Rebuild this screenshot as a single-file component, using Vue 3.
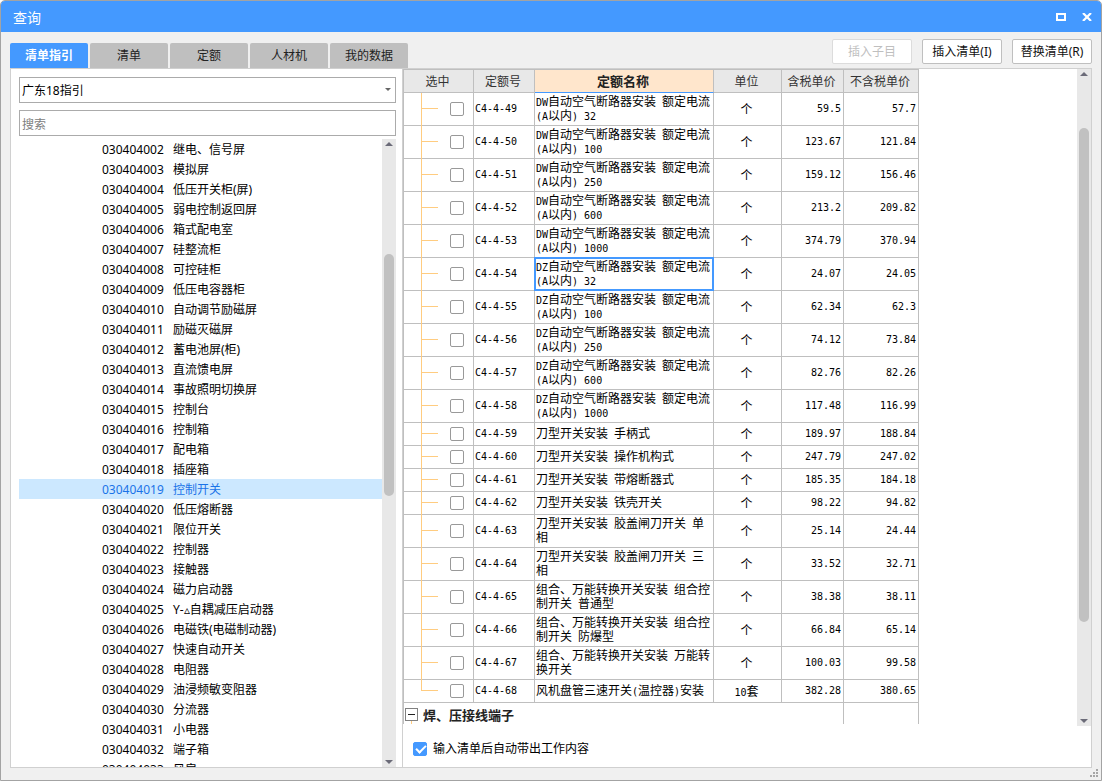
<script setup>
import { ref } from 'vue'

const tabs = ['清单指引', '清单', '定额', '人材机', '我的数据']
const activeTab = ref('清单指引')
const keyword = ref('')
const guide = ref('gd18')
const autoFill = ref(true)
const selectedItem = ref('030404019')
const selectedQuota = ref('C4-4-54')

const items = [
  '继电、信号屏', '模拟屏', '低压开关柜(屏)', '弱电控制返回屏', '箱式配电室', '硅整流柜',
  '可控硅柜', '低压电容器柜', '自动调节励磁屏', '励磁灭磁屏', '蓄电池屏(柜)', '直流馈电屏',
  '事故照明切换屏', '控制台', '控制箱', '配电箱', '插座箱', '控制开关', '低压熔断器', '限位开关',
  '控制器', '接触器', '磁力启动器', 'Y-▵自耦减压启动器', '电磁铁(电磁制动器)', '快速自动开关',
  '电阻器', '油浸频敏变阻器', '分流器', '小电器', '端子箱', '风扇'
].map((name, i) => ({ code: '0304040' + String(i + 2).padStart(2, '0'), name }))

const quotas = [
  ['DW自动空气断路器安装 额定电流(A以内) 32', '个', '59.5', '57.7'],
  ['DW自动空气断路器安装 额定电流(A以内) 100', '个', '123.67', '121.84'],
  ['DW自动空气断路器安装 额定电流(A以内) 250', '个', '159.12', '156.46'],
  ['DW自动空气断路器安装 额定电流(A以内) 600', '个', '213.2', '209.82'],
  ['DW自动空气断路器安装 额定电流(A以内) 1000', '个', '374.79', '370.94'],
  ['DZ自动空气断路器安装 额定电流(A以内) 32', '个', '24.07', '24.05'],
  ['DZ自动空气断路器安装 额定电流(A以内) 100', '个', '62.34', '62.3'],
  ['DZ自动空气断路器安装 额定电流(A以内) 250', '个', '74.12', '73.84'],
  ['DZ自动空气断路器安装 额定电流(A以内) 600', '个', '82.76', '82.26'],
  ['DZ自动空气断路器安装 额定电流(A以内) 1000', '个', '117.48', '116.99'],
  ['刀型开关安装 手柄式', '个', '189.97', '188.84'],
  ['刀型开关安装 操作机构式', '个', '247.79', '247.02'],
  ['刀型开关安装 带熔断器式', '个', '185.35', '184.18'],
  ['刀型开关安装 铁壳开关', '个', '98.22', '94.82'],
  ['刀型开关安装 胶盖闸刀开关 单相', '个', '25.14', '24.44'],
  ['刀型开关安装 胶盖闸刀开关 三相', '个', '33.52', '32.71'],
  ['组合、万能转换开关安装 组合控制开关 普通型', '个', '38.38', '38.11'],
  ['组合、万能转换开关安装 组合控制开关 防爆型', '个', '66.84', '65.14'],
  ['组合、万能转换开关安装 万能转换开关', '个', '100.03', '99.58'],
  ['风机盘管三速开关(温控器)安装', '10套', '382.28', '380.65']
].map(([name, unit, taxed, untaxed], i) => ({
  code: 'C4-4-' + (49 + i), name, unit, taxed, untaxed, checked: false
}))
const rows = ref(quotas)

// Splits a text into half-width and full-width runs, so that each gets its own face.
const runs = (text) =>
  text.match(/[\x20-\x7e]+|[^\x20-\x7e]+/g).map((t) => ({ t, half: /^[\x20-\x7e]/.test(t) }))
</script>

<template>
  <div class="window">
    <header class="titlebar">
      <h1>查询</h1>
      <div class="window-buttons">
        <button type="button" aria-label="最大化">
          <svg width="10" height="8" viewBox="0 0 10 8"><path d="M0 0H10V8H0ZM2 2V6H8V2Z" fill="#fff" fill-rule="evenodd" /></svg>
        </button>
        <button type="button" aria-label="关闭">
          <svg width="10" height="8" viewBox="0 0 10 8"><path d="M1 0L9 8M9 0L1 8" stroke="#fff" stroke-width="2.2" /></svg>
        </button>
      </div>
    </header>

    <div class="toolbar">
      <nav class="tabs">
        <button
          v-for="tab in tabs" :key="tab" type="button" class="tab"
          :class="{ active: tab === activeTab }" @click="activeTab = tab"
        >{{ tab }}</button>
      </nav>
      <div class="actions">
        <button type="button" class="action" disabled>插入子目</button>
        <button type="button" class="action">插入清单(I)</button>
        <button type="button" class="action">替换清单(R)</button>
      </div>
    </div>

    <main class="panes">
      <section class="side">
        <div class="select-wrap">
          <select v-model="guide" class="field" aria-label="指引">
            <option value="gd18">广东18指引</option>
          </select>
          <svg class="caret" width="6" height="3" viewBox="0 0 6 3"><path d="M0 0H6L3 3Z" fill="#666" /></svg>
        </div>
        <input v-model="keyword" class="field search" type="text" placeholder="搜索" aria-label="搜索">
        <div class="tree">
          <ul class="items">
            <li
              v-for="item in items" :key="item.code" class="item"
              :class="{ selected: item.code === selectedItem }" @click="selectedItem = item.code"
            ><span class="item-code">{{ item.code }}</span><span>{{ item.name }}</span></li>
          </ul>
          <div class="scrollbar tree-scroll">
            <svg width="8" height="4" viewBox="0 0 8 4"><path d="M4 0L8 4H0Z" fill="#6b6b78" /></svg>
            <div class="before"></div>
            <div class="thumb"></div>
            <div class="after"></div>
            <svg width="8" height="4" viewBox="0 0 8 4"><path d="M0 0H8L4 4Z" fill="#6b6b78" /></svg>
          </div>
        </div>
      </section>

      <section class="content">
        <div class="grid-area">
          <div class="grid-clip">
            <table class="grid">
              <colgroup>
                <col class="c-check"><col class="c-code"><col class="c-name"><col class="c-unit"><col class="c-taxed"><col class="c-untaxed">
              </colgroup>
              <thead>
                <tr>
                  <th>选中</th><th>定额号</th><th class="current">定额名称</th><th>单位</th><th>含税单价</th><th>不含税单价</th>
                </tr>
              </thead>
              <tbody>
                <tr v-for="(row, i) in rows" :key="row.code">
                  <td class="check" :class="{ last: i === rows.length - 1 }">
                    <input v-model="row.checked" class="box" type="checkbox" :aria-label="row.code">
                  </td>
                  <td class="half code">{{ row.code }}</td>
                  <td class="name" :class="{ focused: row.code === selectedQuota }" @click="selectedQuota = row.code">
                    <div class="name-text"><span v-for="(r, k) in runs(row.name)" :key="k" :class="{ half: r.half }">{{ r.t }}</span></div>
                  </td>
                  <td class="unit"><span v-for="(r, k) in runs(row.unit)" :key="k" :class="{ half: r.half }">{{ r.t }}</span></td>
                  <td class="half price">{{ row.taxed }}</td>
                  <td class="half price">{{ row.untaxed }}</td>
                </tr>
                <tr class="group">
                  <td colspan="5">
                    <div class="group-head">
                      <button type="button" class="toggle" aria-label="折叠">
                        <svg width="7" height="1" viewBox="0 0 7 1"><path d="M0 0H7V1H0Z" fill="#222" /></svg>
                      </button>
                      <span>焊、压接线端子</span>
                    </div>
                  </td>
                  <td></td>
                </tr>
              </tbody>
            </table>
          </div>
          <div class="scrollbar grid-scroll">
            <svg width="8" height="4" viewBox="0 0 8 4"><path d="M4 0L8 4H0Z" fill="#6b6b78" /></svg>
            <div class="before"></div>
            <div class="thumb"></div>
            <div class="after"></div>
            <svg width="8" height="4" viewBox="0 0 8 4"><path d="M0 0H8L4 4Z" fill="#6b6b78" /></svg>
          </div>
        </div>
        <footer class="options">
          <label class="option"><input v-model="autoFill" class="box" type="checkbox">输入清单后自动带出工作内容</label>
        </footer>
      </section>
    </main>

    <svg class="grip" width="8" height="8" viewBox="0 0 8 8">
      <path d="M6 0h2v2h-2zM3 3h2v2h-2zM6 3h2v2h-2zM0 6h2v2h-2zM3 6h2v2h-2zM6 6h2v2h-2z" fill="#a6a6a6" />
    </svg>
  </div>
</template>

<style>
body {
  background: #fff;
}
</style>

<style scoped>
* {
  box-sizing: border-box;
}
.window {
  position: relative;
  display: flex;
  flex-direction: column;
  height: 100vh;
  border: 1px solid #a3a3a3;
  border-radius: 5px 5px 0 0;
  overflow: hidden;
  background: #f0f0f0;
  color: #000;
  font-family: "Noto Sans", "Noto Sans CJK SC", sans-serif;
  font-size: 12px;
  line-height: 20px;
}
button {
  padding: 0;
  border: 0;
  font: inherit;
  color: inherit;
}
.titlebar {
  display: flex;
  flex: none;
  align-items: center;
  justify-content: space-between;
  height: 31px;
  padding: 0 9px 0 12px;
  background: #4499ff;
  color: #fff;
}
h1 {
  margin: 0;
  padding-top: 2px;
  font-size: 14px;
  font-weight: 400;
}
.window-buttons {
  display: flex;
  gap: 16px;
}
.window-buttons button {
  display: flex;
  background: none;
}
.toolbar {
  display: flex;
  flex: none;
  justify-content: space-between;
  align-items: flex-end;
  height: 36px;
  padding: 0 9px;
}
.tabs {
  display: flex;
  gap: 2px;
}
.tab {
  width: 78px;
  height: 25px;
  border-radius: 2px 2px 0 0;
  background: #bfbfbf;
  color: #222;
}
.tab.active {
  background: #4499ff;
  color: #fff;
  font-weight: 700;
}
.actions {
  display: flex;
  gap: 10px;
  padding-bottom: 4px;
}
.action {
  width: 80px;
  height: 25px;
  border: 1px solid #bfbfbf;
  border-radius: 2px;
  background: #fff;
  color: #111;
}
.action:disabled {
  border-color: #dcdcdc;
  color: #bfbfbf;
}
.panes {
  display: flex;
  flex: 1;
  min-height: 0;
  margin: 0 9px 12px;
  border: 1px solid #d0d0d0;
  background: #fff;
}
.side {
  display: flex;
  flex: none;
  flex-direction: column;
  width: 392px;
  padding: 8px 6px 0 8px;
  border-right: 1px solid #d0d0d0;
}
.field {
  display: block;
  width: 100%;
  height: 26px;
  padding: 2px 2px 0;
  border: 1px solid #ababab;
  border-radius: 0;
  appearance: none;
  background: #fff;
  color: #000;
  font: inherit;
}
.search {
  flex: none;
  margin: 7px 0 3px;
}
.search::placeholder {
  color: #808080;
}
.select-wrap {
  position: relative;
}
.caret {
  position: absolute;
  top: 11px;
  right: 5px;
}
.tree {
  display: flex;
  flex: 1;
  min-height: 0;
}
.items {
  flex: 1;
  margin: 0;
  padding: 0;
  overflow: hidden;
  list-style: none;
}
.item {
  display: flex;
  height: 20px;
  padding: 2px 0 0 83px;
  line-height: 18px;
}
.item.selected {
  background: #cce8ff;
  color: #1a73e8;
}
.item-code {
  width: 71px;
}
.scrollbar {
  display: flex;
  flex: none;
  flex-direction: column;
  align-items: center;
  width: 14px;
  padding: 3px 0;
  background: #e8e8e8;
}
.scrollbar svg {
  flex: none;
}
.thumb {
  width: 10px;
  border-radius: 5px;
  background: #c1c1c1;
}
.tree-scroll .before { flex: 108; }
.tree-scroll .thumb { flex: 242; }
.tree-scroll .after { flex: 264; }
.grid-scroll .before { flex: 52; }
.grid-scroll .thumb { flex: 494; }
.grid-scroll .after { flex: 97; }
.content {
  display: flex;
  flex: 1;
  flex-direction: column;
  min-width: 0;
}
.grid-area {
  display: flex;
  flex: 1;
  justify-content: space-between;
  min-height: 0;
}
.grid-clip {
  margin-bottom: 2px;
  overflow: hidden;
  border-left: 1px solid #bfbfbf;
}
.grid {
  width: 515px;
  border-collapse: separate;
  border-spacing: 0;
  border-top: 1px solid #bfbfbf;
  table-layout: fixed;
  line-height: 14px;
  font-family: "Noto Sans CJK SC", sans-serif;
}
.c-check { width: 70px; }
.c-code { width: 61px; }
.c-name { width: 179px; }
.c-unit { width: 68px; }
.c-taxed { width: 62px; }
.c-untaxed { width: 75px; }
th,
td {
  height: 23px;
  padding: 0;
  border-right: 1px solid #bfbfbf;
  border-bottom: 1px solid #bfbfbf;
  vertical-align: middle;
}
th {
  padding-right: 2px;
  background: #e8e8e8;
  color: #333;
  font-weight: 400;
  text-align: center;
}
th.current {
  border-bottom-color: #4499ff;
  background: #ffe6cc;
  color: #222;
  font-size: 13px;
  font-weight: 700;
}
.half {
  font-family: "DejaVu Sans Mono", monospace;
  font-size: 10px;
  line-height: 10px;
}
.check {
  position: relative;
}
.check::before,
.check::after {
  content: "";
  position: absolute;
  left: 17px;
  background: #ffcc80;
}
.check::before {
  top: 0;
  bottom: -1px;
  width: 1px;
}
.check.last::before {
  bottom: 50%;
}
.check::after {
  top: calc(50% - 1px);
  width: 17px;
  height: 1px;
}
.box {
  display: block;
  flex: none;
  width: 14px;
  height: 14px;
  margin: 0;
  border: 1px solid #999;
  border-radius: 2px;
  appearance: none;
  background: #fff;
}
.check .box {
  margin-left: 46px;
}
.box:checked {
  border-color: #4499ff;
  background: #4499ff;
}
.options .box:checked::after {
  content: "";
  display: block;
  width: 8px;
  height: 4px;
  margin: 2px;
  border: solid #fff;
  border-width: 0 0 2px 2px;
  transform: rotate(-45deg);
}
.code {
  padding-left: 1px;
}
.name {
  position: relative;
}
.name-text {
  padding: 1px 0 3px 1px;
}
.name.focused::after {
  content: "";
  position: absolute;
  inset: -1px;
  border: 2px solid #4499ff;
}
.unit {
  padding-right: 2px;
  text-align: center;
}
.price {
  padding-right: 2px;
  text-align: right;
}
.group td {
  border-bottom: 0;
}
.group-head {
  display: flex;
  align-items: center;
  gap: 5px;
  padding-left: 1px;
  color: #222;
  font-size: 13px;
  font-weight: 700;
}
.toggle {
  position: relative;
  display: flex;
  align-items: center;
  justify-content: center;
  width: 13px;
  height: 13px;
  border: 1px solid #808080;
  background: #fff;
}
.toggle::after {
  content: "";
  position: absolute;
  top: 12px;
  left: 5px;
  width: 1px;
  height: 5px;
  background: #ffcc80;
}
.options {
  display: flex;
  flex: none;
  align-items: center;
  height: 41px;
  padding: 5px 10px 0;
}
.option {
  display: flex;
  align-items: center;
  gap: 6px;
}
.grip {
  position: absolute;
  right: 3px;
  bottom: 3px;
}
</style>
